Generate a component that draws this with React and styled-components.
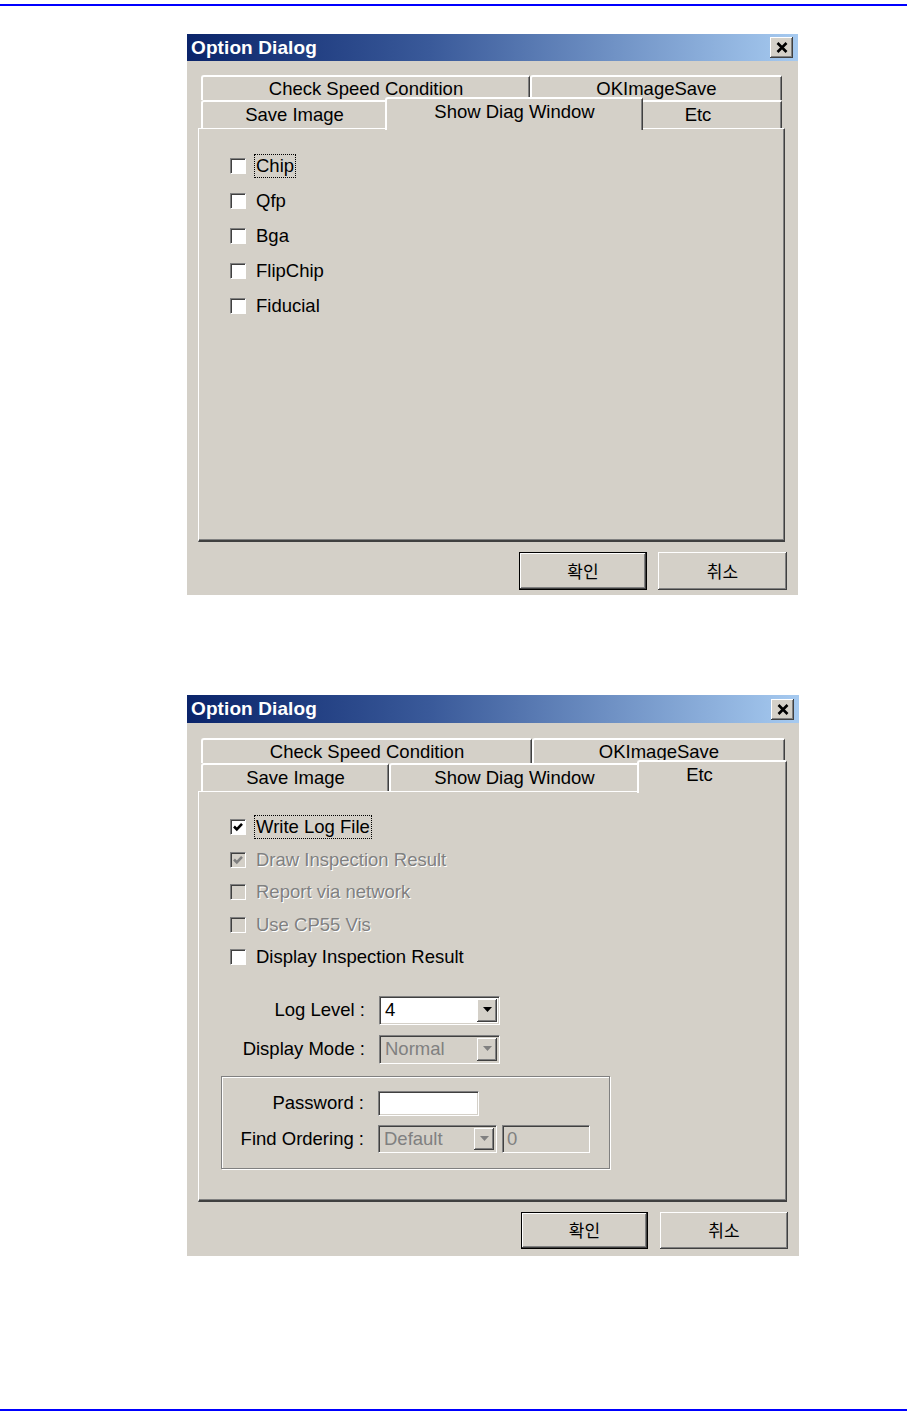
import React from "react";
import styled, { createGlobalStyle, css } from "styled-components";

const Global = createGlobalStyle`
  html, body { margin: 0; padding: 0; background: #ffffff; }
  body { font-family: "Liberation Sans", Arial, "Noto Sans CJK KR", sans-serif; color: #000; }
  * { box-sizing: border-box; }
`;

const Page = styled.div`
  width: 907px;
  height: 1421px;
  display: flex;
  flex-direction: column;
`;

const Rule = styled.div`
  flex: none;
  height: 2px;
  margin-top: ${(p) => p.$top}px;
  background: #0000ff;
`;

const Dialog = styled.div`
  flex: none;
  width: ${(p) => p.$w}px;
  margin-left: 187px;
  margin-top: ${(p) => p.$top}px;
  background: #d4d0c8;
  display: flex;
  flex-direction: column;
`;

const TitleBar = styled.div`
  flex: none;
  height: ${(p) => p.$h}px;
  display: flex;
  align-items: center;
  justify-content: space-between;
  padding: 0 5px 0 4px;
  background: linear-gradient(to right, #0a246a 0%, #3a5a9a 40%, #a6caf0 100%);
`;

const Title = styled.span`
  color: #ffffff;
  font-weight: bold;
  font-size: 19px;
  letter-spacing: 0.1px;
`;

const CloseButton = styled.span`
  width: 23px;
  height: 21px;
  display: flex;
  align-items: center;
  justify-content: center;
  background: #d4d0c8;
  box-shadow: inset -1px -1px #404040, inset 1px 1px #ffffff, inset -2px -2px #808080;
`;

const Body = styled.div`
  display: flex;
  flex-direction: column;
  padding: ${(p) => p.$pt}px 11px ${(p) => p.$pb}px 11px;
`;

const TabArea = styled.div`
  display: flex;
  flex-direction: column;
  margin-right: ${(p) => p.$mr}px;
`;

const TabStack = styled.div`
  display: flex;
  flex-direction: column;
  padding: 0 3px;
`;

const TabRow = styled.div`
  display: flex;
  height: ${(p) => p.$h}px;
`;

const Tab = styled.div`
  flex: 0 0 ${(p) => p.$w}px;
  height: ${(p) => p.$h}px;
  display: flex;
  align-items: center;
  justify-content: center;
  padding-right: ${(p) => p.$shift || 0}px;
  font-size: 18.5px;
  background: #d4d0c8;
  border-top: 2px solid #ffffff;
  border-left: 2px solid #ffffff;
  border-right: 1px solid #404040;
  box-shadow: inset -1px 0 #808080;
  border-top-left-radius: 3px;
  border-top-right-radius: 2px;
  white-space: nowrap;
  ${(p) =>
    p.$selected &&
    css`
      flex-basis: ${p.$w + 4}px;
      height: ${p.$h + 5}px;
      margin: -3px -2px -2px -2px;
      padding-bottom: 6px;
      position: relative;
      z-index: 2;
    `}
`;

const Panel = styled.div`
  height: ${(p) => p.$h}px;
  display: flex;
  flex-direction: column;
  border-top: 1px solid #ffffff;
  border-left: 1px solid #ffffff;
  border-right: 1px solid #404040;
  border-bottom: 2px solid #404040;
  box-shadow: inset -1px -1px #808080;
  padding-top: 19px;
`;

const CheckList = styled.div`
  display: flex;
  flex-direction: column;
  padding-left: 31px;
`;

const CheckRow = styled.div`
  height: ${(p) => p.$h}px;
  display: flex;
  align-items: center;
  gap: 8px;
`;

const Box = styled.span`
  flex: none;
  width: 16px;
  height: 16px;
  display: flex;
  align-items: center;
  justify-content: center;
  background: ${(p) => (p.$disabled ? "#d4d0c8" : "#ffffff")};
  border-top: 1px solid #808080;
  border-left: 1px solid #808080;
  border-right: 1px solid #ffffff;
  border-bottom: 1px solid #ffffff;
  box-shadow: inset 1px 1px #404040;
`;

const Label = styled.span`
  font-size: 18.5px;
  line-height: 22px;
  padding: 0 1px;
  border: 1px dotted ${(p) => (p.$focus ? "#000000" : "transparent")};
  color: ${(p) => (p.$disabled ? "#808080" : "#000000")};
  text-shadow: ${(p) => (p.$disabled ? "1px 1px 0 #ffffff" : "none")};
  white-space: nowrap;
`;

const FieldRow = styled.div`
  display: grid;
  grid-template-columns: ${(p) => p.$label}px auto;
  column-gap: 14px;
  align-items: center;
  margin-left: ${(p) => p.$ml || 0}px;
  margin-top: ${(p) => p.$mt || 0}px;
`;

const FieldLabel = styled.span`
  font-size: 18.5px;
  text-align: right;
  white-space: nowrap;
`;

const Controls = styled.div`
  display: flex;
  align-items: center;
  gap: 5px;
`;

const Sunken = css`
  border-top: 1px solid #808080;
  border-left: 1px solid #808080;
  border-right: 1px solid #ffffff;
  border-bottom: 1px solid #ffffff;
  box-shadow: inset 1px 1px #404040, inset -1px -1px #d4d0c8;
`;

const Combo = styled.div`
  width: ${(p) => p.$w}px;
  height: ${(p) => p.$h}px;
  display: flex;
  align-items: stretch;
  padding: 2px;
  background: ${(p) => (p.$disabled ? "#d4d0c8" : "#ffffff")};
  ${Sunken}
`;

const ComboValue = styled.span`
  flex: 1;
  display: flex;
  align-items: center;
  padding-left: 3px;
  font-size: 18.5px;
  color: ${(p) => (p.$disabled ? "#808080" : "#000000")};
`;

const DropButton = styled.span`
  flex: none;
  width: 20px;
  display: flex;
  align-items: center;
  justify-content: center;
  background: #d4d0c8;
  box-shadow: inset -1px -1px #404040, inset 1px 1px #ffffff, inset -2px -2px #808080;
`;

const Edit = styled.div`
  width: ${(p) => p.$w}px;
  height: ${(p) => p.$h}px;
  display: flex;
  align-items: center;
  padding-left: 4px;
  font-size: 18.5px;
  color: #808080;
  background: ${(p) => (p.$disabled ? "#d4d0c8" : "#ffffff")};
  ${Sunken}
`;

const Group = styled.div`
  width: 389px;
  height: 93px;
  margin-left: 22px;
  margin-top: 12px;
  padding-top: 14px;
  display: flex;
  flex-direction: column;
  gap: 9px;
  border: 1px solid #808080;
  box-shadow: inset 1px 1px #ffffff, 1px 1px #ffffff;
`;

const ButtonRow = styled.div`
  display: flex;
  justify-content: flex-end;
  gap: ${(p) => p.$gap}px;
  margin-top: 10px;
`;

const Button = styled.div`
  width: ${(p) => p.$w}px;
  height: ${(p) => p.$h}px;
  display: flex;
  align-items: center;
  justify-content: center;
  padding-bottom: 2px;
  font-family: "Noto Sans CJK KR", "Liberation Sans", sans-serif;
  font-size: 17px;
  background: #d4d0c8;
  box-shadow: inset -1px -1px #404040, inset 1px 1px #ffffff, inset -2px -2px #808080;
  ${(p) =>
    p.$default &&
    css`
      border: 1px solid #000000;
    `}
`;

const XIcon = () => (
  <svg width="12" height="11" viewBox="0 0 12 11">
    <path d="M1.5 1 L10.5 10 M10.5 1 L1.5 10" stroke="#000" strokeWidth="2.6" />
  </svg>
);

const CheckMark = ({ color }) => (
  <svg width="12" height="12" viewBox="0 0 12 12">
    <path d="M2 5.5 L4.8 8.3 L10 2.8" stroke={color} strokeWidth="2.6" fill="none" />
  </svg>
);

const Arrow = ({ color }) => (
  <svg width="9" height="6" viewBox="0 0 9 6">
    <polygon points="0,0 9,0 4.5,5" fill={color} />
  </svg>
);

const Check = ({ label, checked, disabled, focus, h }) => (
  <CheckRow $h={h}>
    <Box $disabled={disabled}>
      {checked && <CheckMark color={disabled ? "#808080" : "#000"} />}
    </Box>
    <Label $disabled={disabled} $focus={focus}>
      {label}
    </Label>
  </CheckRow>
);

const ComboBox = ({ value, w, h, disabled }) => (
  <Combo $w={w} $h={h} $disabled={disabled}>
    <ComboValue $disabled={disabled}>{value}</ComboValue>
    <DropButton>
      <Arrow color={disabled ? "#808080" : "#000"} />
    </DropButton>
  </Combo>
);

const OptionDialog = ({ g, rows, children }) => (
  <Dialog $w={g.w} $top={g.top}>
    <TitleBar $h={g.title}>
      <Title>Option Dialog</Title>
      <CloseButton>
        <XIcon />
      </CloseButton>
    </TitleBar>
    <Body $pt={g.pt} $pb={g.pb}>
      <TabArea $mr={g.mr}>
        <TabStack>
          {rows.map((row, i) => (
            <TabRow key={i} $h={i === 0 ? 25 : 28}>
              {row.map((t) => (
                <Tab
                  key={t.label}
                  $w={t.w}
                  $h={i === 0 ? 25 : 28}
                  $selected={t.selected}
                  $shift={t.shift}
                >
                  {t.label}
                </Tab>
              ))}
            </TabRow>
          ))}
        </TabStack>
        <Panel $h={g.panel}>{children}</Panel>
      </TabArea>
      <ButtonRow $gap={g.gap}>
        <Button $default $w={g.ok} $h={g.bh}>
          확인
        </Button>
        <Button $w={g.cancel} $h={g.bh}>
          취소
        </Button>
      </ButtonRow>
    </Body>
  </Dialog>
);

const rows1 = [
  [
    { label: "Check Speed Condition", w: 329 },
    { label: "OKImageSave", w: 252 },
  ],
  [
    { label: "Save Image", w: 186 },
    { label: "Show Diag Window", w: 254, selected: true },
    { label: "Etc", w: 141, shift: 28 },
  ],
];

const rows2 = [
  [
    { label: "Check Speed Condition", w: 331 },
    { label: "OKImageSave", w: 253 },
  ],
  [
    { label: "Save Image", w: 188 },
    { label: "Show Diag Window", w: 250 },
    { label: "Etc", w: 146, selected: true, shift: 26 },
  ],
];

const g1 = { w: 611, top: 28, title: 27, pt: 14, pb: 5, mr: 2, panel: 414, gap: 11, ok: 128, cancel: 129, bh: 38 };
const g2 = { w: 612, top: 100, title: 28, pt: 15, pb: 7, mr: 1, panel: 411, gap: 12, ok: 127, cancel: 128, bh: 37 };

export default function App() {
  return (
    <>
      <Global />
      <Page>
        <Rule $top={4} />
        <OptionDialog g={g1} rows={rows1}>
          <CheckList>
            <Check h={35} label="Chip" focus />
            <Check h={35} label="Qfp" />
            <Check h={35} label="Bga" />
            <Check h={35} label="FlipChip" />
            <Check h={35} label="Fiducial" />
          </CheckList>
        </OptionDialog>
        <OptionDialog g={g2} rows={rows2}>
          <CheckList>
            <Check h={32.5} label="Write Log File" checked focus />
            <Check h={32.5} label="Draw Inspection Result" checked disabled />
            <Check h={32.5} label="Report via network" disabled />
            <Check h={32.5} label="Use CP55 Vis" disabled />
            <Check h={32.5} label="Display Inspection Result" />
          </CheckList>
          <FieldRow $label={144} $ml={22} $mt={22}>
            <FieldLabel>Log Level :</FieldLabel>
            <ComboBox value="4" w={121} h={29} />
          </FieldRow>
          <FieldRow $label={144} $ml={22} $mt={10}>
            <FieldLabel>Display Mode :</FieldLabel>
            <ComboBox value="Normal" w={121} h={29} disabled />
          </FieldRow>
          <Group>
            <FieldRow $label={142}>
              <FieldLabel>Password :</FieldLabel>
              <Edit $w={101} $h={25} />
            </FieldRow>
            <FieldRow $label={142}>
              <FieldLabel>Find Ordering :</FieldLabel>
              <Controls>
                <ComboBox value="Default" w={119} h={28} disabled />
                <Edit $w={88} $h={28} $disabled>
                  0
                </Edit>
              </Controls>
            </FieldRow>
          </Group>
        </OptionDialog>
        <Rule $top={153} />
      </Page>
    </>
  );
}
